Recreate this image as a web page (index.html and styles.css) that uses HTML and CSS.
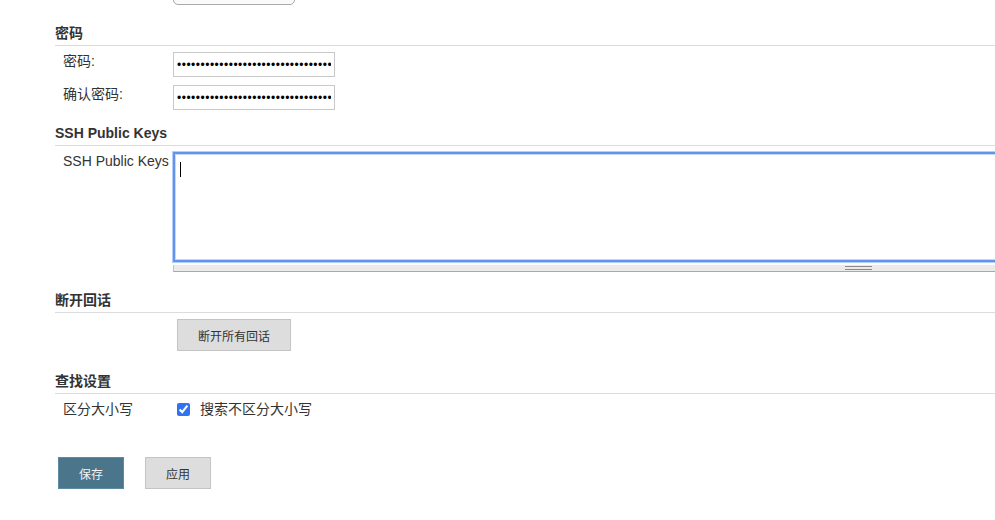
FILE: index.html
```html
<!DOCTYPE html>
<html lang="zh-CN">

<head>
    <meta charset="UTF-8">
    <title>用户设置</title>
    <link rel="stylesheet" href="styles.css">
</head>

<body>
    <form class="config-form">
        <div class="row top-row">
            <div class="label"></div>
            <div class="field"><div class="select-stub"></div></div>
        </div>

        <div class="section-header first">密码</div>
        <div class="row">
            <div class="label">密码:</div>
            <div class="field"><input class="text-input" type="password" value="abcdefghijabcdefghijabcdefghijabcdefghij"></div>
        </div>
        <div class="row">
            <div class="label">确认密码:</div>
            <div class="field"><input class="text-input" type="password" value="abcdefghijabcdefghijabcdefghijabcdefghij"></div>
        </div>

        <div class="section-header">SSH Public Keys</div>
        <div class="row">
            <div class="label">SSH Public Keys</div>
            <div class="field">
                <div class="keys-box">
                    <textarea class="keys-area"></textarea>
                    <span class="caret"></span>
                    <div class="resize-handle"><span class="grip"></span></div>
                </div>
            </div>
        </div>

        <div class="section-header after-keys">断开回话</div>
        <div class="row">
            <div class="label"></div>
            <div class="field"><button type="button" class="btn">断开所有回话</button></div>
        </div>

        <div class="section-header after-button">查找设置</div>
        <div class="row">
            <div class="label">区分大小写</div>
            <div class="field">
                <label class="check"><input type="checkbox" checked> 搜索不区分大小写</label>
            </div>
        </div>

        <div class="actions">
            <button type="button" class="btn btn-primary">保存</button>
            <button type="button" class="btn">应用</button>
        </div>
    </form>
</body>

</html>
```

FILE: styles.css
```css
body {
    margin: 0;
    font-family: "Liberation Sans", "Noto Sans CJK SC", sans-serif;
    font-size: 14px;
    color: #333;
    background: #fff;
    overflow: hidden;
}

.config-form {
    width: 1600px;
    padding-left: 55px;
}

.row {
    display: flex;
    align-items: flex-start;
    margin-top: 6px;
}

.row + .row {
    margin-top: 8px;
}

.label {
    width: 110px;
    padding-left: 8px;
    line-height: 18px;
    flex-shrink: 0;
}

.field {
    line-height: 18px;
}

.top-row {
    margin-top: 0;
}

.select-stub {
    width: 120px;
    height: 22px;
    margin-top: -19px;
    border: 1px solid #a9a9a9;
    border-radius: 5px;
    background: #fafafa;
}

/* section titles with a rule under them */
.section-header {
    font-weight: bold;
    line-height: 18px;
    padding-bottom: 3px;
    border-bottom: 1px solid #dcdcdc;
    margin-top: 14px;
}

.section-header.first {
    margin-top: 19px;
}

.section-header.after-keys {
    margin-top: 19px;
}

.section-header.after-button {
    margin-top: 21px;
}

.text-input {
    display: block;
    box-sizing: border-box;
    width: 162px;
    height: 25px;
    margin: 0;
    padding: 0 3px;
    border: 1px solid #c8c8c8;
    font-family: "Liberation Sans", sans-serif;
    font-size: 12px;
    letter-spacing: 0.5px;
    color: #000;
    outline: none;
}

.keys-box {
    position: relative;
    width: 1370px;
}

.keys-area {
    display: block;
    box-sizing: border-box;
    width: 1370px;
    height: 110px;
    margin: 0;
    border: 2px solid #6394ec;
    box-shadow: 0 0 0 1px #b7cff8, inset 0 0 0 1px #c5d8fa;
    resize: none;
    outline: none;
    background: #fff;
}

.caret {
    position: absolute;
    left: 7px;
    top: 10px;
    width: 1px;
    height: 15px;
    background: #000;
}

.resize-handle {
    box-sizing: border-box;
    height: 7px;
    margin-top: 3px;
    background: #ebebeb;
    border-left: 1px solid #c4c4c4;
    border-bottom: 1px solid #a8a8a8;
    display: flex;
    justify-content: center;
    align-items: center;
}

.grip {
    width: 27px;
    height: 2px;
    border-top: 1px solid #8a8a8a;
    border-bottom: 1px solid #8a8a8a;
}

.btn {
    font-family: "Liberation Sans", "Noto Sans CJK SC", sans-serif;
    font-size: 12px;
    color: #333;
    background: #dddddd;
    border: 1px solid #c4c4c4;
    height: 32px;
    padding: 0 20px;
    margin: 0 0 0 4px;
    cursor: pointer;
}

.btn-primary {
    background: #4b758b;
    border-color: #5b8aa2;
    color: #f2f2f2;
    margin-left: 3px;
}

.check {
    display: flex;
    align-items: center;
}

.check input {
    width: 13px;
    height: 13px;
    margin: 0 10px 0 4px;
    accent-color: #2f73f0;
}

.actions {
    display: flex;
    gap: 17px;
    margin-top: 39px;
}
```
